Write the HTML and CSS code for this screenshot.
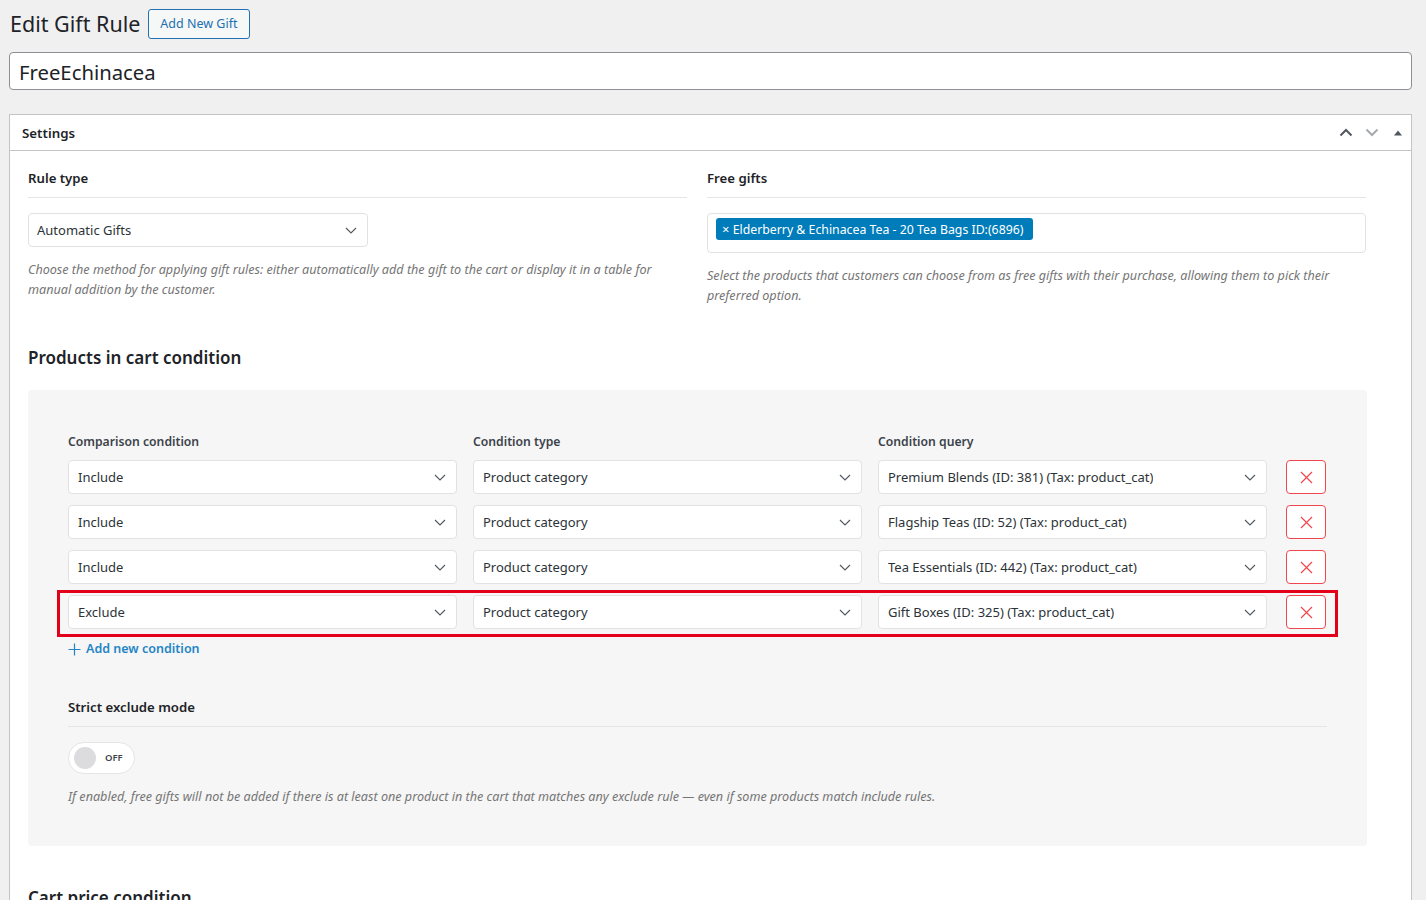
FILE: index.html
```html
<!DOCTYPE html>
<html lang="en">
<head>
<meta charset="utf-8">
<title>Edit Gift Rule</title>
<link rel="stylesheet" href="styles.css">
</head>
<body>
<div class="wrap">
  <div class="heading">
    <h1 class="page-title">Edit Gift Rule</h1>
    <a class="title-action" href="#">Add New Gift</a>
  </div>
  <div class="title-input">FreeEchinacea</div>

  <div class="postbox">
    <div class="postbox-header">
      <h2 class="postbox-title">Settings</h2>
      <div class="handles">
        <svg class="h-icon" width="14" height="9" viewBox="0 0 14 9"><path d="M1.5 7.5L7 2l5.5 5.5" fill="none" stroke="#50575e" stroke-width="2"/></svg>
        <svg class="h-icon" width="14" height="9" viewBox="0 0 14 9"><path d="M1.5 1.5L7 7l5.5-5.5" fill="none" stroke="#a7aaad" stroke-width="2"/></svg>
        <svg class="h-icon h-tri" width="10" height="8" viewBox="0 0 10 8"><path d="M1 6.5L5 1.5l4 5z" fill="#50575e"/></svg>
      </div>
    </div>
    <div class="inside">
      <div class="two-col">
        <div class="field">
          <div class="field-label">Rule type</div>
          <div class="select select-short">
            <span>Automatic Gifts</span>
            <svg class="chev" width="12" height="7" viewBox="0 0 12 7"><path d="M1 1l5 5 5-5" fill="none" stroke="#50575e" stroke-width="1.1"/></svg>
          </div>
          <p class="desc">Choose the method for applying gift rules: either automatically add the gift to the cart or display it in a table for manual addition by the customer.</p>
        </div>
        <div class="field">
          <div class="field-label">Free gifts</div>
          <div class="tagbox">
            <span class="tag"><span class="tag-x">×</span> Elderberry &amp; Echinacea Tea - 20 Tea Bags ID:(6896)</span>
          </div>
          <p class="desc">Select the products that customers can choose from as free gifts with their purchase, allowing them to pick their preferred option.</p>
        </div>
      </div>

      <h3 class="section-title">Products in cart condition</h3>

      <div class="panel">
        <div class="cond-grid cond-head">
          <div class="col-label">Comparison condition</div>
          <div class="col-label">Condition type</div>
          <div class="col-label">Condition query</div>
          <div></div>
        </div>

        <div class="cond-grid cond-row">
          <div class="select"><span>Include</span><svg class="chev" width="12" height="7" viewBox="0 0 12 7"><path d="M1 1l5 5 5-5" fill="none" stroke="#50575e" stroke-width="1.1"/></svg></div>
          <div class="select"><span>Product category</span><svg class="chev" width="12" height="7" viewBox="0 0 12 7"><path d="M1 1l5 5 5-5" fill="none" stroke="#50575e" stroke-width="1.1"/></svg></div>
          <div class="select"><span>Premium Blends (ID: 381) (Tax: product_cat)</span><svg class="chev" width="12" height="7" viewBox="0 0 12 7"><path d="M1 1l5 5 5-5" fill="none" stroke="#50575e" stroke-width="1.1"/></svg></div>
          <button class="del" type="button"><svg width="13" height="13" viewBox="0 0 13 13"><path d="M1 1l11 11M12 1L1 12" stroke="#f0474f" stroke-width="1.2"/></svg></button>
        </div>

        <div class="cond-grid cond-row">
          <div class="select"><span>Include</span><svg class="chev" width="12" height="7" viewBox="0 0 12 7"><path d="M1 1l5 5 5-5" fill="none" stroke="#50575e" stroke-width="1.1"/></svg></div>
          <div class="select"><span>Product category</span><svg class="chev" width="12" height="7" viewBox="0 0 12 7"><path d="M1 1l5 5 5-5" fill="none" stroke="#50575e" stroke-width="1.1"/></svg></div>
          <div class="select"><span>Flagship Teas (ID: 52) (Tax: product_cat)</span><svg class="chev" width="12" height="7" viewBox="0 0 12 7"><path d="M1 1l5 5 5-5" fill="none" stroke="#50575e" stroke-width="1.1"/></svg></div>
          <button class="del" type="button"><svg width="13" height="13" viewBox="0 0 13 13"><path d="M1 1l11 11M12 1L1 12" stroke="#f0474f" stroke-width="1.2"/></svg></button>
        </div>

        <div class="cond-grid cond-row">
          <div class="select"><span>Include</span><svg class="chev" width="12" height="7" viewBox="0 0 12 7"><path d="M1 1l5 5 5-5" fill="none" stroke="#50575e" stroke-width="1.1"/></svg></div>
          <div class="select"><span>Product category</span><svg class="chev" width="12" height="7" viewBox="0 0 12 7"><path d="M1 1l5 5 5-5" fill="none" stroke="#50575e" stroke-width="1.1"/></svg></div>
          <div class="select"><span>Tea Essentials (ID: 442) (Tax: product_cat)</span><svg class="chev" width="12" height="7" viewBox="0 0 12 7"><path d="M1 1l5 5 5-5" fill="none" stroke="#50575e" stroke-width="1.1"/></svg></div>
          <button class="del" type="button"><svg width="13" height="13" viewBox="0 0 13 13"><path d="M1 1l11 11M12 1L1 12" stroke="#f0474f" stroke-width="1.2"/></svg></button>
        </div>

        <div class="cond-grid cond-row highlight">
          <div class="select"><span>Exclude</span><svg class="chev" width="12" height="7" viewBox="0 0 12 7"><path d="M1 1l5 5 5-5" fill="none" stroke="#50575e" stroke-width="1.1"/></svg></div>
          <div class="select"><span>Product category</span><svg class="chev" width="12" height="7" viewBox="0 0 12 7"><path d="M1 1l5 5 5-5" fill="none" stroke="#50575e" stroke-width="1.1"/></svg></div>
          <div class="select"><span>Gift Boxes (ID: 325) (Tax: product_cat)</span><svg class="chev" width="12" height="7" viewBox="0 0 12 7"><path d="M1 1l5 5 5-5" fill="none" stroke="#50575e" stroke-width="1.1"/></svg></div>
          <button class="del" type="button"><svg width="13" height="13" viewBox="0 0 13 13"><path d="M1 1l11 11M12 1L1 12" stroke="#f0474f" stroke-width="1.2"/></svg></button>
        </div>

        <a class="add-link" href="#"><svg width="13" height="13" viewBox="0 0 13 13"><path d="M6.5 0.5v12M0.5 6.5h12" stroke="#2385c5" stroke-width="1.2"/></svg>Add new condition</a>

        <div class="strict">
          <div class="field-label">Strict exclude mode</div>
          <div class="toggle"><span class="knob"></span><span class="toggle-text">OFF</span></div>
          <p class="desc">If enabled, free gifts will not be added if there is at least one product in the cart that matches any exclude rule — even if some products match include rules.</p>
        </div>
      </div>

      <h3 class="section-title">Cart price condition</h3>
    </div>
  </div>
</div>
</body>
</html>
```

FILE: styles.css
```css
* { box-sizing: border-box; }

html, body {
  margin: 0;
  padding: 0;
  background: #f0f0f1;
  color: #1d2327;
  font-family: "Noto Sans", "Open Sans", sans-serif;
  font-size: 13px;
  overflow: hidden;
}

.wrap {
  padding: 0 14px 0 9px;
}

.heading {
  display: flex;
  align-items: center;
  gap: 8px;
  padding-top: 9px;
  height: 39px;
}

.page-title {
  margin: 0;
  font-size: 21.5px;
  font-weight: 400;
  line-height: 30px;
  color: #1d2327;
  padding-left: 1px;
}

.title-action {
  display: inline-flex;
  align-items: center;
  height: 30px;
  padding: 0 11px;
  border: 1px solid #2271b1;
  border-radius: 3px;
  background: #f6f7f7;
  color: #2271b1;
  font-size: 12.5px;
  text-decoration: none;
  margin-top: -1px;
}

.title-input {
  margin-top: 13px;
  height: 38px;
  border: 1px solid #8c8f94;
  border-radius: 4px;
  background: #fff;
  padding: 0 9px;
  font-size: 20.3px;
  line-height: 38px;
  color: #1d2327;
}

.postbox {
  margin-top: 24px;
  background: #fff;
  border: 1px solid #c3c4c7;
  border-bottom: none;
  height: 800px;
}

.postbox-header {
  display: flex;
  align-items: center;
  justify-content: space-between;
  height: 36px;
  border-bottom: 1px solid #c3c4c7;
}

.postbox-title {
  margin: 0;
  padding-left: 12px;
  font-size: 13.3px;
  font-weight: 600;
  color: #1d2327;
}

.handles {
  display: flex;
  align-items: center;
  gap: 12px;
  padding-right: 8px;
}

.h-icon { display: block; }
.h-tri { margin-left: 2px; }

.inside {
  padding: 16px 44px 0 18px;
}

.two-col {
  display: grid;
  grid-template-columns: 659px 659px;
  column-gap: 20px;
}

.field-label {
  font-size: 13.2px;
  font-weight: 600;
  line-height: 20px;
  color: #1d2327;
  padding-bottom: 9px;
  border-bottom: 1px solid #e5e5e5;
  margin-top: 1px;
}

.select {
  display: flex;
  align-items: center;
  justify-content: space-between;
  height: 34px;
  background: #fff;
  border: 1px solid #e2e2e2;
  border-radius: 4px;
  padding: 0 10px 0 8px;
  font-size: 13px;
  color: #2c3338;
  white-space: nowrap;
  min-width: 0;
}

.select span {
  overflow: hidden;
  text-overflow: ellipsis;
}

.chev { flex: none; display: block; }

.select-short {
  width: 340px;
  margin-top: 15px;
}

.desc {
  margin: 13px 0 0;
  font-size: 12.6px;
  line-height: 19.5px;
  font-style: italic;
  color: #757575;
}

.tagbox {
  margin-top: 15px;
  height: 40px;
  border: 1px solid #e2e2e2;
  border-radius: 4px;
  padding: 4px 8px;
}

.tag {
  display: inline-block;
  height: 22px;
  line-height: 22px;
  padding: 0 10px 0 6px;
  background: #007cba;
  color: #fff;
  border-radius: 3px;
  font-size: 12.3px;
}

.tag-x { font-size: 13px; }

.section-title {
  margin: 41px 0 0;
  font-size: 17px;
  font-weight: 600;
  line-height: 24px;
  color: #1d2327;
}

.panel {
  margin-top: 20px;
  background: #f6f6f6;
  border-radius: 4px;
  padding: 42px 40px 40px;
}

.panel + .section-title {
  margin-top: 40px;
}

.cond-grid {
  display: grid;
  grid-template-columns: 389px 389px 389px 40px;
  column-gap: 16px;
}

.col-label {
  font-size: 12.2px;
  font-weight: 600;
  line-height: 20px;
  color: #3c434a;
  margin-bottom: 8px;
}

.cond-row {
  position: relative;
  margin-bottom: 11px;
}

.cond-row .select {
  padding-left: 9px;
  padding-right: 10px;
}

.del {
  margin-left: 3px;
  width: 40px;
  height: 34px;
  background: #fff;
  border: 1px solid #f0474f;
  border-radius: 4px;
  display: flex;
  align-items: center;
  justify-content: center;
  padding: 0;
}

.del svg { display: block; }

.highlight::after {
  content: "";
  position: absolute;
  top: -5px;
  bottom: -8px;
  left: -11px;
  right: -11px;
  border: 3px solid #e2001a;
  pointer-events: none;
}

.highlight { margin-bottom: 0; }

.add-link {
  display: inline-flex;
  align-items: center;
  gap: 5px;
  margin-top: 10px;
  color: #2385c5;
  font-size: 12.5px;
  font-weight: 600;
  line-height: 20px;
  text-decoration: none;
}

.add-link svg { display: block; }

.strict {
  margin-top: 37px;
}

.toggle {
  margin-top: 15px;
  width: 67px;
  height: 32px;
  border: 1px solid #e5e5e5;
  border-radius: 16px;
  background: #fff;
  display: flex;
  align-items: center;
  padding-left: 5px;
  gap: 9px;
}

.knob {
  width: 22px;
  height: 22px;
  border-radius: 50%;
  background: #dcdcde;
}

.toggle-text {
  font-size: 9.5px;
  font-weight: 600;
  color: #3c434a;
}

.strict .desc {
  margin-top: 13px;
}
```
